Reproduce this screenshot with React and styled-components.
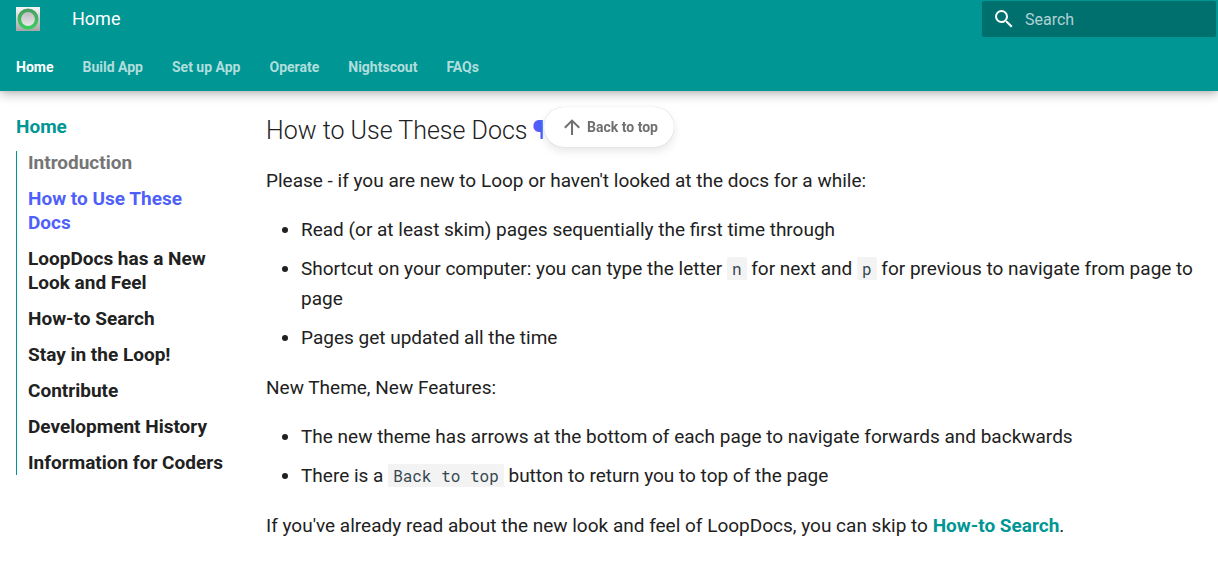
import React from "react";
import styled, { createGlobalStyle } from "styled-components";

const GlobalStyle = createGlobalStyle`
  *, *::before, *::after { box-sizing: border-box; }
  body {
    margin: 0;
    background: #fff;
    color: #212121;
    font-family: Roboto, "Liberation Sans", sans-serif;
    font-size: 19px;
    line-height: 30px;
  }
  a { color: inherit; text-decoration: none; }
`;

const Header = styled.header`
  background: #009694;
  color: #fff;
  box-shadow: 0 0 5px rgba(0, 0, 0, 0.14), 0 4px 10px rgba(0, 0, 0, 0.22);
`;

const TopRow = styled.div`
  display: flex;
  align-items: center;
  height: 38px;
  padding: 0 2px 0 16px;
`;

const Logo = styled.a`
  display: flex;
  margin-right: 32px;
`;

const SiteTitle = styled.span`
  flex: 1;
  font-size: 18px;
  line-height: 38px;
`;

const SearchBox = styled.label`
  display: flex;
  align-items: center;
  gap: 9px;
  width: 234px;
  height: 36px;
  padding: 0 10px;
  border-radius: 2px;
  background: #00706f;
`;

const SearchInput = styled.input`
  flex: 1;
  min-width: 0;
  padding: 2px 0 0;
  border: 0;
  outline: 0;
  background: transparent;
  color: #fff;
  font: inherit;
  font-size: 16px;
  &::placeholder { color: rgba(255, 255, 255, 0.7); opacity: 1; }
`;

const Tabs = styled.nav`
  display: flex;
  gap: 29px;
  padding: 17px 16px 12px;
`;

const Tab = styled.a`
  font-size: 14px;
  line-height: 24px;
  font-weight: 700;
  color: ${(p) => (p.$active ? "#fff" : "rgba(255, 255, 255, 0.7)")};
`;

const Page = styled.div`
  display: flex;
  align-items: flex-start;
`;

const Sidebar = styled.nav`
  flex: none;
  width: 242px;
  padding: 24px 16px;
  font-weight: 700;
  line-height: 24px;
`;

const SidebarTitle = styled.a`
  display: block;
  margin-bottom: 12px;
  color: #009694;
`;

const TocList = styled.ul`
  display: flex;
  flex-direction: column;
  gap: 12px;
  margin: 0;
  padding: 0 0 0 11px;
  border-left: 1px solid #009694;
  list-style: none;
`;

const tocColors = { passed: "#757575", active: "#4f5ffa", normal: "#212121" };

const TocLink = styled.a`
  display: block;
  color: ${(p) => tocColors[p.$state]};
`;

const Content = styled.main`
  flex: 1;
  min-width: 0;
  padding: 22px 24px 24px;
`;

const Heading = styled.h2`
  margin: 0 0 17px;
  font-size: 25px;
  line-height: 36px;
  font-weight: 300;
`;

const HeadingMark = styled.a`
  margin-left: 5px;
  color: #4f5ffa;
  font-weight: 400;
`;

const Paragraph = styled.p`
  margin: 0 0 19px;
`;

const BulletList = styled.ul`
  display: flex;
  flex-direction: column;
  gap: 9px;
  margin: 0 0 20px;
  padding: 0 0 0 35px;
`;

const Code = styled.code`
  padding: 1px 5px;
  border-radius: 2px;
  background: #f3f3f3;
  color: #36464e;
  font-family: "Roboto Mono", "Liberation Mono", monospace;
  font-size: 16px;
`;

const TextLink = styled.a`
  color: #009694;
  font-weight: 700;
`;

const BackToTop = styled.button`
  position: fixed;
  top: 107px;
  left: 50%;
  transform: translateX(-50%);
  display: flex;
  align-items: center;
  gap: 3px;
  height: 40px;
  padding: 0 16px;
  border: 0;
  border-radius: 20px;
  background: #fff;
  color: #707070;
  box-shadow: 0 4px 10px rgba(0, 0, 0, 0.1), 0 0 1px rgba(0, 0, 0, 0.25);
  font: inherit;
  font-size: 14px;
  font-weight: 700;
  white-space: nowrap;
  cursor: pointer;
`;

const tabs = ["Home", "Build App", "Set up App", "Operate", "Nightscout", "FAQs"];

const toc = [
  ["Introduction", "passed"],
  ["How to Use These Docs", "active"],
  ["LoopDocs has a New Look and Feel", "normal"],
  ["How-to Search", "normal"],
  ["Stay in the Loop!", "normal"],
  ["Contribute", "normal"],
  ["Development History", "normal"],
  ["Information for Coders", "normal"],
];

function LoopLogo() {
  return (
    <svg width="24" height="24" viewBox="0 0 24 24" aria-hidden="true">
      <defs>
        <linearGradient id="plate" x1="0" y1="0" x2="0" y2="1">
          <stop offset="0" stopColor="#f7f7f7" />
          <stop offset="1" stopColor="#a6a6a6" />
        </linearGradient>
        <linearGradient id="ring" gradientUnits="userSpaceOnUse" x1="0" y1="2" x2="0" y2="22">
          <stop offset="0" stopColor="#4a9e62" />
          <stop offset="1" stopColor="#36cf5e" />
        </linearGradient>
        <linearGradient id="hole" x1="0" y1="0" x2="0" y2="1">
          <stop offset="0" stopColor="#b8b8b8" />
          <stop offset="1" stopColor="#eeeeee" />
        </linearGradient>
      </defs>
      <rect width="24" height="24" fill="url(#plate)" />
      <circle cx="12" cy="12" r="8.700" fill="url(#hole)" stroke="url(#ring)" strokeWidth="3.600" />
    </svg>
  );
}

export default function App() {
  return (
    <>
      <GlobalStyle />
      <Header>
        <TopRow>
          <Logo href="#" aria-label="LoopDocs">
            <LoopLogo />
          </Logo>
          <SiteTitle>Home</SiteTitle>
          <SearchBox>
            <svg width="24" height="24" viewBox="0 0 24 24" fill="#fff" aria-hidden="true">
              <path d="M9.5 3A6.5 6.5 0 0 1 16 9.500c0 1.610-.59 3.090-1.560 4.230l.27.27h.79l5 5-1.500 1.500-5-5v-.79l-.27-.27A6.516 6.516 0 0 1 9.500 16 6.500 6.500 0 0 1 3 9.500 6.500 6.500 0 0 1 9.500 3m0 2C7 5 5 7 5 9.500S7 14 9.500 14 14 12 14 9.500 12 5 9.500 5Z" />
            </svg>
            <SearchInput type="text" placeholder="Search" aria-label="Search" />
          </SearchBox>
        </TopRow>
        <Tabs aria-label="Tabs">
          {tabs.map((t, i) => (
            <Tab key={t} href="#" $active={i === 0}>{t}</Tab>
          ))}
        </Tabs>
      </Header>
      <Page>
        <Sidebar aria-label="Table of contents">
          <SidebarTitle href="#">Home</SidebarTitle>
          <TocList>
            {toc.map(([label, state]) => (
              <li key={label}>
                <TocLink href="#" $state={state}>{label}</TocLink>
              </li>
            ))}
          </TocList>
        </Sidebar>
        <Content>
          <Heading>
            How to Use These Docs
            <HeadingMark href="#" aria-label="Permanent link">¶</HeadingMark>
          </Heading>
          <Paragraph>
            Please - if you are new to Loop or haven't looked at the docs for a while:
          </Paragraph>
          <BulletList>
            <li>Read (or at least skim) pages sequentially the first time through</li>
            <li>
              Shortcut on your computer: you can type the letter <Code>n</Code> for next and{" "}
              <Code>p</Code> for previous to navigate from page to page
            </li>
            <li>Pages get updated all the time</li>
          </BulletList>
          <Paragraph>New Theme, New Features:</Paragraph>
          <BulletList>
            <li>The new theme has arrows at the bottom of each page to navigate forwards and backwards</li>
            <li>
              There is a <Code>Back to top</Code> button to return you to top of the page
            </li>
          </BulletList>
          <Paragraph>
            If you've already read about the new look and feel of LoopDocs, you can skip to{" "}
            <TextLink href="#">How-to Search</TextLink>.
          </Paragraph>
        </Content>
      </Page>
      <BackToTop type="button">
        <svg width="24" height="24" viewBox="0 0 24 24" fill="currentColor" aria-hidden="true">
          <path d="M13 20h-2V8l-5.500 5.500-1.420-1.420L12 4.160l7.920 7.920-1.420 1.420L13 8v12Z" />
        </svg>
        Back to top
      </BackToTop>
    </>
  );
}
